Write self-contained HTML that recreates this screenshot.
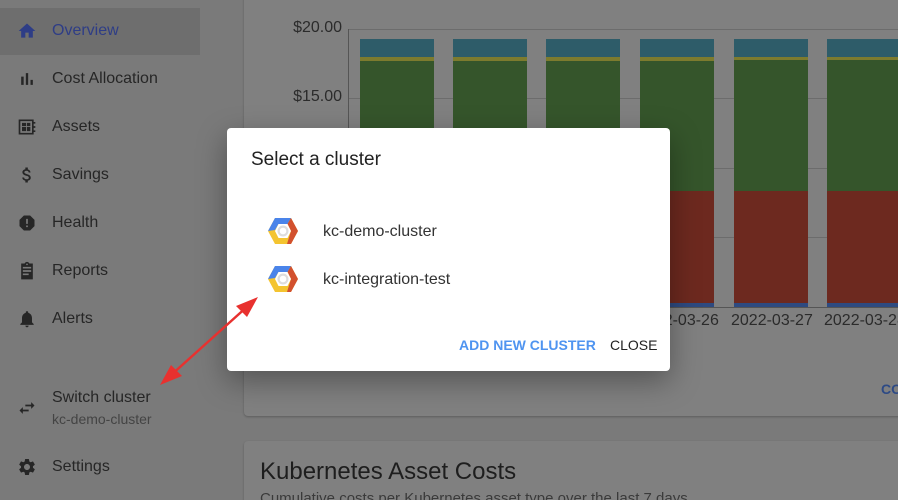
<!DOCTYPE html>
<html><head><meta charset="utf-8"><style>
*{box-sizing:border-box;margin:0;padding:0}
html,body{width:898px;height:500px;overflow:hidden}
body{background:#7a7a7a;font-family:"Liberation Sans",sans-serif;position:relative;white-space:nowrap}
.nav{position:absolute;left:0;height:48px;width:200px;display:flex;align-items:center;color:#262626;font-size:16px}
.nav .ic{position:absolute;left:17px;top:14px;width:20px;height:20px}
.nav span{position:absolute;left:52px;top:15px}
.card{position:absolute;background:#808080;border-radius:4px;box-shadow:0 1px 2px rgba(0,0,0,.25)}
.abs{position:absolute}
.ylab{position:absolute;right:0;font-size:16px;color:#2b2b2b}
.xlab{position:absolute;top:312px;font-size:16px;color:#2b2b2b}
.bar{position:absolute;width:74px;top:39px;height:268px}
.bar div{position:absolute;left:0;right:0}
.dlg{position:absolute;left:227px;top:128px;width:443px;height:243px;background:#fff;border-radius:4px;box-shadow:0 10px 30px rgba(0,0,0,.35)}
</style></head><body>
<div class="abs" style="left:0;top:8px;width:200px;height:47px;background:#6e6e6e"></div>
<div class="nav" style="top:7px;color:#2e3d86"><svg class="ic" viewBox="0 0 24 24"><path fill="#2e3d86" d="M10 20v-6h4v6h5v-8h3L12 3 2 12h3v8z"/></svg><span>Overview</span></div>
<div class="nav" style="top:55px"><svg class="ic" viewBox="0 0 24 24"><path fill="#262626" d="M5 9.2h3V19H5zM10.6 5h2.8v14h-2.8zm5.6 8H19v6h-2.8z"/></svg><span>Cost Allocation</span></div>
<div class="nav" style="top:103px"><svg class="ic" viewBox="0 0 24 24"><path fill="#262626" d="M2 3h18v3h2v2h-2v3h2v2h-2v3h2v2h-2v3H2zM4 5v14h14V5zm2 2h5v4H6zm6 0h4v4h-4zm-6 5h5v5H6zm6 0h4v5h-4z"/></svg><span>Assets</span></div>
<div class="nav" style="top:151px"><svg class="ic" viewBox="0 0 24 24"><path fill="#262626" d="M11.8 10.9c-2.27-.59-3-1.2-3-2.150 0-1.09 1.01-1.850 2.7-1.850 1.78 0 2.44.85 2.5 2.1h2.21c-.07-1.72-1.12-3.3-3.21-3.81V3h-3v2.16c-1.94.42-3.5 1.68-3.5 3.61 0 2.31 1.91 3.46 4.7 4.130 2.5.6 3 1.48 3 2.41 0 .69-.49 1.79-2.7 1.79-2.06 0-2.87-.92-2.98-2.1h-2.2c.12 2.19 1.76 3.42 3.68 3.83V21h3v-2.15c1.95-.37 3.5-1.5 3.5-3.55 0-2.84-2.43-3.81-4.7-4.4z"/></svg><span>Savings</span></div>
<div class="nav" style="top:199px"><svg class="ic" viewBox="0 0 24 24"><path fill="#262626" d="M15.7 3H8.3L3 8.3v7.4L8.3 21h7.4l5.3-5.3V8.3zM13 17h-2v-2h2zm0-4h-2V7h2z"/></svg><span>Health</span></div>
<div class="nav" style="top:247px"><svg class="ic" viewBox="0 0 24 24"><path fill="#262626" d="M19 3h-4.18C14.4 1.84 13.3 1 12 1s-2.4.84-2.82 2H5v19h14zm-7 0c.55 0 1 .45 1 1s-.45 1-1 1-1-.45-1-1 .45-1 1-1zm2 14H7v-2h7zm3-4H7v-2h10zm0-4H7V7h10z"/></svg><span>Reports</span></div>
<div class="nav" style="top:295px"><svg class="ic" viewBox="0 0 24 24"><path fill="#262626" d="M12 22c1.1 0 2-.9 2-2h-4c0 1.1.9 2 2 2zm6-6v-5c0-3.07-1.64-5.640-4.5-6.32V4c0-.83-.67-1.5-1.5-1.5s-1.5.67-1.5 1.5v.68C7.63 5.36 6 7.92 6 11v5l-2 2v1h16v-1z"/></svg><span>Alerts</span></div>
<svg class="abs" style="left:17px;top:398px" width="20" height="20" viewBox="0 0 24 24"><path fill="#262626" d="M6.99 11L3 15l3.99 4v-3H14v-2H6.99zM21 9l-3.99-4v3H10v2h7.01v3z"/></svg>
<div class="abs" style="left:52px;top:389px;font-size:16px;color:#262626">Switch cluster</div>
<div class="abs" style="left:52px;top:411px;font-size:14px;color:#444">kc-demo-cluster</div>
<div class="nav" style="top:443px"><svg class="ic" viewBox="0 0 24 24"><path fill="#262626" d="M19.14 12.94c.04-.3.06-.61.06-.94 0-.32-.02-.64-.07-.94l2.03-1.58a.49.49 0 00.12-.61l-1.92-3.32a.488.488 0 00-.59-.22l-2.39.96c-.5-.38-1.03-.7-1.62-.94l-.36-2.54a.484.484 0 00-.48-.41h-3.84c-.24 0-.43.17-.47.41l-.36 2.54c-.59.24-1.13.57-1.62.94l-2.39-.96c-.22-.08-.47 0-.59.22L2.74 8.87c-.12.21-.08.47.12.61l2.03 1.58c-.05.3-.09.63-.09.94s.02.64.07.94l-2.03 1.58a.49.49 0 00-.12.61l1.920 3.32c.12.22.37.29.59.22l2.39-.96c.5.38 1.03.7 1.62.94l.36 2.54c.05.24.24.41.48.41h3.84c.24 0 .44-.17.47-.41l.36-2.54c.59-.24 1.13-.56 1.62-.94l2.39.96c.22.08.47 0 .59-.22l1.92-3.32c.12-.22.07-.47-.12-.61zM12 15.6c-1.98 0-3.6-1.62-3.6-3.6s1.62-3.6 3.6-3.6 3.6 1.62 3.6 3.6-1.62 3.6-3.6 3.6z"/></svg><span>Settings</span></div>

<div class="card" style="left:244px;top:-10px;width:670px;height:426px"></div>
<div class="card" style="left:244px;top:441px;width:670px;height:80px"></div>
<div class="abs" style="left:260px;top:458px;font-size:24px;color:#1e1e1e">Kubernetes Asset Costs</div>
<div class="abs" style="left:260px;top:490px;font-size:15px;color:#3a3a3a">Cumulative costs per Kubernetes asset type over the last 7 days</div>
<div class="abs" style="left:881px;top:381px;font-size:14px;color:#2d4a85;font-weight:bold">CO</div>

<div class="abs" style="left:349px;top:29px;width:560px;height:1px;background:#6c6c6c"></div>
<div class="abs" style="left:349px;top:98px;width:560px;height:1px;background:#6c6c6c"></div>
<div class="abs" style="left:349px;top:168px;width:560px;height:1px;background:#6c6c6c"></div>
<div class="abs" style="left:349px;top:237px;width:560px;height:1px;background:#6c6c6c"></div>
<div class="abs" style="left:348px;top:29px;width:1px;height:279px;background:#555"></div>
<div class="abs" style="left:348px;top:307px;width:560px;height:1px;background:#555"></div>
<div class="abs" style="left:220px;top:19px;width:122px;height:20px"><div class="ylab">$20.00</div></div>
<div class="abs" style="left:220px;top:88px;width:122px;height:20px"><div class="ylab">$15.00</div></div>

<div class="bar" style="left:360px"><div style="top:0;height:18px;background:#2e5c69"></div><div style="top:18px;height:4px;background:#7d7b2e"></div><div style="top:22px;height:130px;background:#35552b"></div><div style="top:152px;height:112px;background:#6d291f"></div><div style="top:264px;height:4px;background:#2e4a80"></div></div>
<div class="bar" style="left:453px"><div style="top:0;height:18px;background:#2e5c69"></div><div style="top:18px;height:4px;background:#7d7b2e"></div><div style="top:22px;height:130px;background:#35552b"></div><div style="top:152px;height:112px;background:#6d291f"></div><div style="top:264px;height:4px;background:#2e4a80"></div></div>
<div class="bar" style="left:546px"><div style="top:0;height:18px;background:#2e5c69"></div><div style="top:18px;height:4px;background:#7d7b2e"></div><div style="top:22px;height:130px;background:#35552b"></div><div style="top:152px;height:112px;background:#6d291f"></div><div style="top:264px;height:4px;background:#2e4a80"></div></div>
<div class="bar" style="left:640px"><div style="top:0;height:18px;background:#2e5c69"></div><div style="top:18px;height:4px;background:#7d7b2e"></div><div style="top:22px;height:130px;background:#35552b"></div><div style="top:152px;height:112px;background:#6d291f"></div><div style="top:264px;height:4px;background:#2e4a80"></div></div>
<div class="bar" style="left:734px"><div style="top:0;height:18px;background:#2e5c69"></div><div style="top:18px;height:3px;background:#7d7b2e"></div><div style="top:21px;height:131px;background:#35552b"></div><div style="top:152px;height:112px;background:#6d291f"></div><div style="top:264px;height:4px;background:#2e4a80"></div></div>
<div class="bar" style="left:827px"><div style="top:0;height:18px;background:#2e5c69"></div><div style="top:18px;height:3px;background:#7d7b2e"></div><div style="top:21px;height:131px;background:#35552b"></div><div style="top:152px;height:112px;background:#6d291f"></div><div style="top:264px;height:4px;background:#2e4a80"></div></div>
<div class="xlab" style="left:637px">2022-03-26</div>
<div class="xlab" style="left:731px">2022-03-27</div>
<div class="xlab" style="left:824px">2022-03-28</div>

<div class="dlg">
<div class="abs" style="left:24px;top:21px;font-size:19px;color:#222">Select a cluster</div>
<svg class="abs" style="left:40px;top:88px" width="32" height="30" viewBox="0 0 32 30"><polygon points="1,15 8,2 24,2 31,15 24,28 8,28" fill="#f4c430"/><polygon points="1,15 8,2 24,2 20.5,8 11.5,8 8,14" fill="#4a84ea"/><polygon points="24,2 31,15 24,28 20,28 24,15 20.5,8" fill="#d2502e"/><polygon points="8,15 11.5,8 20.5,8 24,15 20.5,22 11.5,22" fill="#fff"/><circle cx="16" cy="15" r="5.5" fill="#ddd"/><circle cx="16" cy="15" r="3.3" fill="#fff"/></svg>
<svg class="abs" style="left:40px;top:136px" width="32" height="30" viewBox="0 0 32 30"><polygon points="1,15 8,2 24,2 31,15 24,28 8,28" fill="#f4c430"/><polygon points="1,15 8,2 24,2 20.5,8 11.5,8 8,14" fill="#4a84ea"/><polygon points="24,2 31,15 24,28 20,28 24,15 20.5,8" fill="#d2502e"/><polygon points="8,15 11.5,8 20.5,8 24,15 20.5,22 11.5,22" fill="#fff"/><circle cx="16" cy="15" r="5.5" fill="#ddd"/><circle cx="16" cy="15" r="3.3" fill="#fff"/></svg>
<div class="abs" style="left:96px;top:95px;font-size:16px;color:#333">kc-demo-cluster</div>
<div class="abs" style="left:96px;top:143px;font-size:16px;color:#333">kc-integration-test</div>
<div class="abs" style="left:232px;top:209px;font-size:14px;font-weight:bold;color:#4f94f0">ADD NEW CLUSTER</div>
<div class="abs" style="left:383px;top:209px;font-size:14px;color:#222">CLOSE</div>
</div>

<svg class="abs" style="left:0;top:0" width="898" height="500"><line x1="170" y1="376" x2="249" y2="305" stroke="#e8312f" stroke-width="2.5"/><polygon points="258,297 236,306 247,317" fill="#e8312f"/><polygon points="160,385 182,376 171,365" fill="#e8312f"/></svg>
</body></html>
